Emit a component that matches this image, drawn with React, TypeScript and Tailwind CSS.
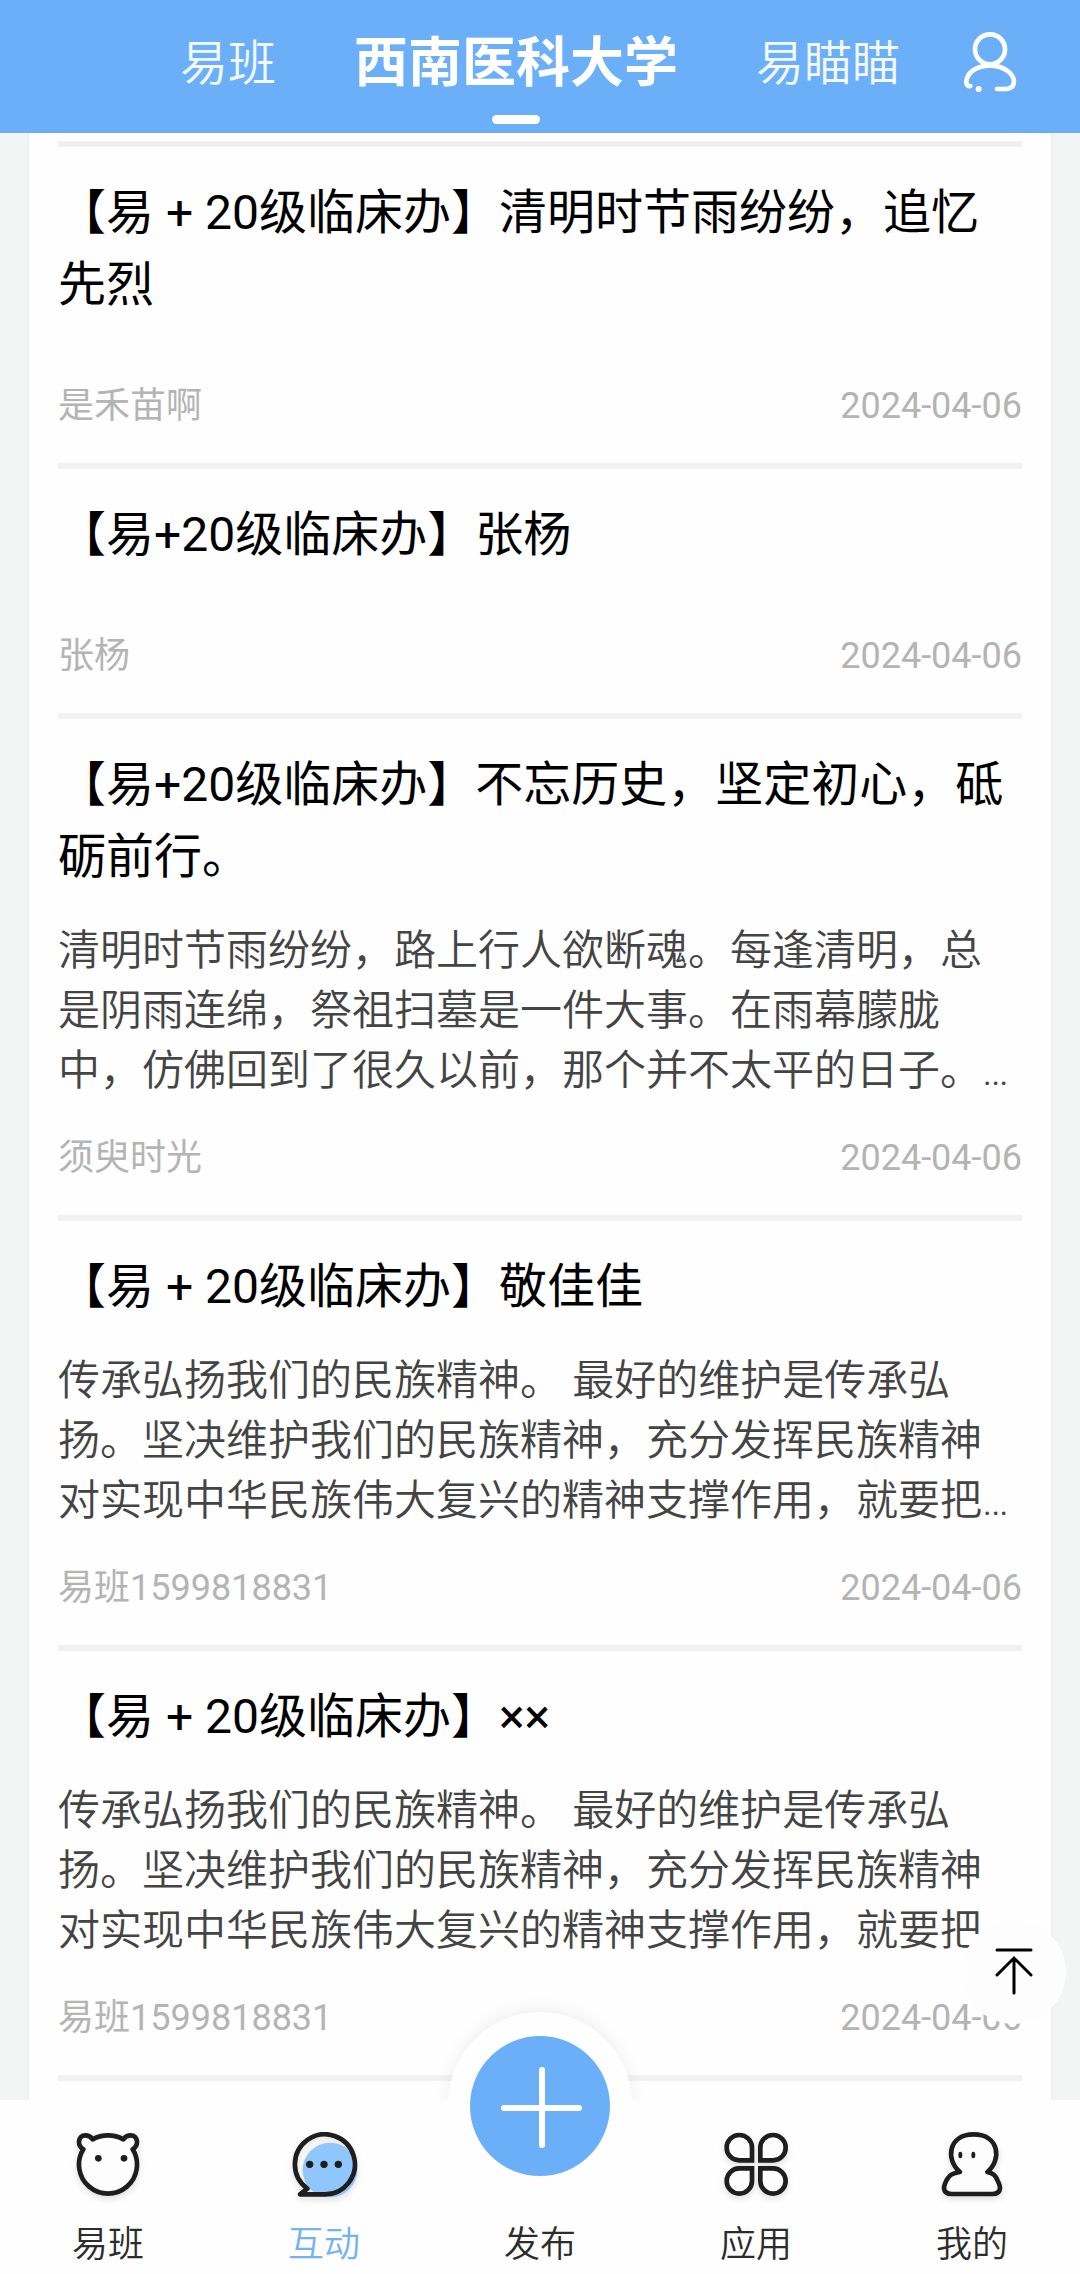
import type { ReactNode } from "react";

type Post = {
  id: number;
  title: string;
  summary?: string;
  author: string;
  date: string;
};

const legacy =
  "传承弘扬我们的民族精神。 最好的维护是传承弘扬。坚决维护我们的民族精神，充分发挥民族精神对实现中华民族伟大复兴的精神支撑作用，就要把…";

const posts: Post[] = [
  {
    id: 1,
    title: "【易 + 20级临床办】清明时节雨纷纷，追忆先烈",
    author: "是禾苗啊",
    date: "2024-04-06",
  },
  {
    id: 2,
    title: "【易+20级临床办】张杨",
    author: "张杨",
    date: "2024-04-06",
  },
  {
    id: 3,
    title: "【易+20级临床办】不忘历史，坚定初心，砥砺前行。",
    summary:
      "清明时节雨纷纷，路上行人欲断魂。每逢清明，总是阴雨连绵，祭祖扫墓是一件大事。在雨幕朦胧中，仿佛回到了很久以前，那个并不太平的日子。…",
    author: "须臾时光",
    date: "2024-04-06",
  },
  {
    id: 4,
    title: "【易 + 20级临床办】敬佳佳",
    summary: legacy,
    author: "易班1599818831",
    date: "2024-04-06",
  },
  {
    id: 5,
    title: "【易 + 20级临床办】××",
    summary: legacy,
    author: "易班1599818831",
    date: "2024-04-06",
  },
];

function UserIcon() {
  return (
    <svg
      viewBox="60 58 180 192"
      className="h-16 w-[60px]"
      fill="none"
      stroke="currentColor"
      strokeWidth="14"
      strokeLinecap="round"
      aria-hidden="true"
    >
      <circle cx="150" cy="116" r="45" />
      <path d="M91 226C82 228 78 222 79 212C82 184 110 165 150 165C190 165 220 187 222 212C222 227 214 234 200 235H171" />
      <circle cx="116" cy="235" r="9" fill="currentColor" stroke="none" />
    </svg>
  );
}

function BearIcon() {
  return (
    <svg viewBox="42 60 204 204" className="size-[68px] drop-shadow-md" fill="none" stroke="#1e1e1e" strokeWidth="14" strokeLinejoin="round" aria-hidden="true">
      <path fill="#fdfdfd" d="M70 118C52 108 52 76 76 76C88 76 94 82 98 88A96 96 0 0 1 190 88C194 82 200 76 212 76C236 76 236 108 218 118A87 87 0 1 1 70 118Z" />
      <g fill="#1e1e1e" stroke="none">
        <circle cx="115" cy="145" r="10" />
        <circle cx="192" cy="145" r="10" />
      </g>
    </svg>
  );
}

function ChatIcon() {
  return (
    <svg viewBox="690 60 204 204" className="size-[68px] drop-shadow-md" fill="none" stroke="#1e1e1e" strokeWidth="14" aria-hidden="true">
      <circle cx="810" cy="180" r="82" fill="#8fc7fc" stroke="none" />
      <path d="M720 253L742 236A90 90 0 1 1 792 253Z" strokeLinejoin="round" />
      <g fill="#1e1e1e" stroke="none">
        <circle cx="749" cy="163" r="11" />
        <circle cx="792" cy="163" r="11" />
        <circle cx="835" cy="163" r="11" />
      </g>
    </svg>
  );
}

function AppsIcon() {
  return (
    <svg viewBox="66 60 204 204" className="size-[68px] drop-shadow-md" fill="#fdfdfd" stroke="#1e1e1e" strokeWidth="14" aria-hidden="true">
      <path d="M156 151H118A38 38 0 1 1 156 113Z" />
      <path d="M181 151H219A38 38 0 1 0 181 113Z" />
      <path d="M156 175H118A38 38 0 1 0 156 213Z" />
      <path d="M181 175H219A38 38 0 1 1 181 213Z" />
    </svg>
  );
}

function MineIcon() {
  return (
    <svg viewBox="714 60 204 204" className="size-[68px] drop-shadow-md" fill="#fdfdfd" stroke="#1e1e1e" strokeWidth="14" strokeLinejoin="round" aria-hidden="true">
      <path d="M780 186C736 150 744 73 821 73C898 73 906 150 862 186C880 190 886 196 892 210C897 220 900 226 900 234C899 248 890 252 878 252H754C742 252 733 248 732 234C732 226 735 220 740 210C748 196 756 189 780 186Z" />
      <g fill="#1e1e1e" stroke="none">
        <ellipse cx="781" cy="135" rx="6" ry="10" />
        <ellipse cx="820" cy="135" rx="6" ry="10" />
      </g>
    </svg>
  );
}

function PostItem({ post }: { post: Post }) {
  return (
    <article className="flex flex-col border-b-6 border-[#f1f1f2] pt-[30px] pb-8">
      <h2 className="text-5xl leading-[72px] font-normal text-black">{post.title}</h2>
      <p className="mt-7 text-[42px] leading-[60px] text-[#444]">{post.summary}</p>
      <div className="mt-8 flex justify-between text-4xl leading-[50px] font-normal text-[#b4b4b4]">
        <span>{post.author}</span>
        <time dateTime={post.date}>{post.date}</time>
      </div>
    </article>
  );
}

function NavItem({ label, icon, active }: { label: string; icon?: ReactNode; active?: boolean }) {
  return (
    <a
      href="#"
      aria-current={active ? "page" : undefined}
      className={`flex flex-col items-center justify-end gap-[22px] text-4xl leading-[50px] ${
        active ? "text-[#75b2f2]" : "text-[#2c2c2c]"
      }`}
    >
      {icon}
      {label}
    </a>
  );
}

export default function App() {
  return (
    <div
      lang="zh-CN"
      className="flex min-h-screen flex-col bg-[#f3f5f5] font-['Roboto','Noto_Sans_CJK_SC',sans-serif] font-[350]"
    >
      <header className="flex h-[133px] items-start bg-[#6caff9] pr-[60px] pl-[180px] text-white">
        <nav className="flex gap-[78px] text-5xl">
          <button className="h-[124px] pt-1 text-[#f2f8ff]">易班</button>
          <button className="relative h-[124px] pt-1 text-[54px] font-bold">
            西南医科大学
            <span className="absolute bottom-0 left-1/2 h-[9px] w-12 -translate-x-1/2 rounded-full bg-white" />
          </button>
          <button className="h-[124px] pt-1 text-[#f2f8ff]">易瞄瞄</button>
        </nav>
        <button aria-label="个人中心" className="ml-auto flex h-[124px] items-center">
          <UserIcon />
        </button>
      </header>

      <main className="relative flex flex-1 px-[29px]">
        <div className="w-full bg-[#fefefe] px-[29px] pt-2 pb-[18px] shadow-[0_0_6px_rgba(0,0,0,0.05)]">
          <div className="h-1.5 bg-[#f0f0f2]" />
          {posts.map((post) => (
            <PostItem key={post.id} post={post} />
          ))}
        </div>
        <button
          aria-label="回到顶部"
          className="absolute right-3.5 bottom-[76px] flex size-[104px] items-center justify-center rounded-full bg-[#fdfdfd]"
        >
          <svg viewBox="0 0 40 48" className="h-12 w-10" fill="none" stroke="#000" strokeWidth="3" strokeLinecap="round" aria-hidden="true">
            <path d="M3 2H37M20 10V45M3 27L20 10L37 27" />
          </svg>
        </button>
      </main>

      <footer className="relative">
        <div className="absolute -top-[88px] left-1/2 size-[184px] -translate-x-1/2 rounded-full bg-[#fefefe] shadow-[0_-4px_16px_rgba(0,0,0,0.06)]" />
        <nav className="relative grid h-[174px] grid-cols-5 bg-[#fefefe] pb-1">
          <NavItem label="易班" icon={<BearIcon />} />
          <NavItem label="互动" icon={<ChatIcon />} active />
          <NavItem label="发布" />
          <NavItem label="应用" icon={<AppsIcon />} />
          <NavItem label="我的" icon={<MineIcon />} />
        </nav>
        <button
          aria-label="发布"
          className="absolute -top-16 left-1/2 flex size-[140px] -translate-x-1/2 items-center justify-center rounded-full bg-[#6caff9]"
        >
          <svg viewBox="0 0 84 84" className="size-[84px]" stroke="#fff" strokeWidth="6" strokeLinecap="round" aria-hidden="true">
            <path d="M44 6V81M6 44H81" />
          </svg>
        </button>
      </footer>
    </div>
  );
}
